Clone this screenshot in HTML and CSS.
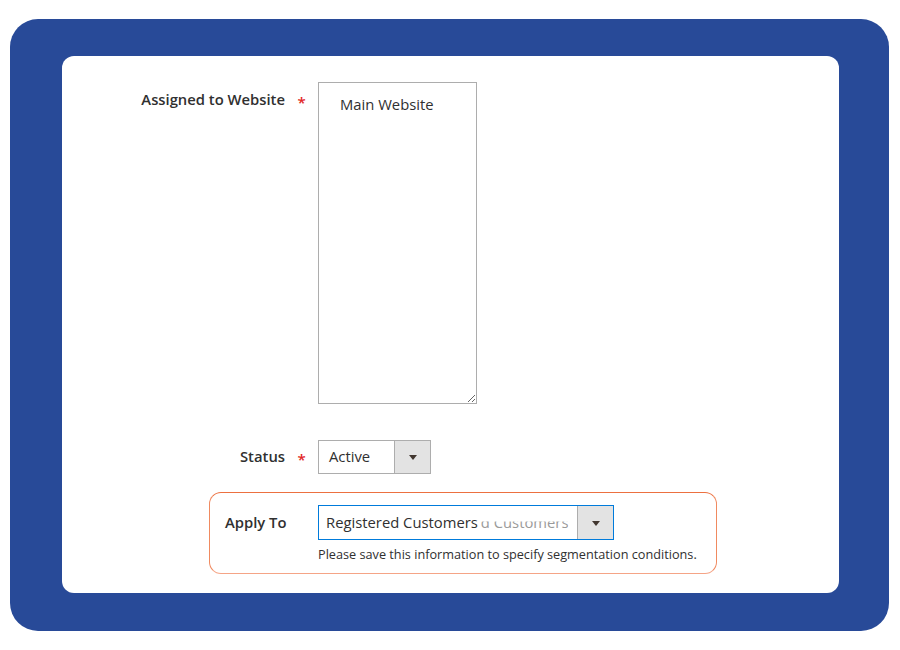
FILE: index.html
```html
<!DOCTYPE html>
<html>
<head>
<meta charset="utf-8">
<link rel="stylesheet" href="styles.css">
</head>
<body>
<div class="frame">
  <div class="panel">
    <div class="row row-website">
      <div class="label">Assigned to Website</div>
      <div class="req">*</div>
      <textarea class="multi" readonly>Main Website</textarea>
    </div>
    <div class="row row-status">
      <div class="label">Status</div>
      <div class="req">*</div>
      <div class="select select-status">
        <span class="select-text">Active</span>
        <span class="select-btn"><span class="tri"></span></span>
      </div>
    </div>
    <div class="apply-box">
      <div class="apply-row">
        <div class="apply-label">Apply To</div>
        <div class="apply-control">
          <div class="select select-apply">
            <span class="select-text">Registered Customers<span class="ghost">d Customers</span></span>
            <span class="select-btn"><span class="tri"></span></span>
          </div>
          <div class="note">Please save this information to specify segmentation conditions.</div>
        </div>
      </div>
    </div>
  </div>
</div>
</body>
</html>
```
FILE: styles.css
```css
html, body {
  margin: 0;
  padding: 0;
  background: #ffffff;
}
body {
  font-family: "Open Sans", "Liberation Sans", sans-serif;
  color: #303030;
  width: 900px;
  height: 650px;
  overflow: hidden;
}
.frame {
  margin: 19px 0 0 10px;
  width: 879px;
  height: 612px;
  box-sizing: border-box;
  background: #284a98;
  border-radius: 28px;
  padding: 37px 50px 38px 52px;
}
.panel {
  width: 777px;
  height: 537px;
  background: #ffffff;
  border-radius: 12px;
  padding-top: 26px;
  box-sizing: border-box;
}
.row {
  display: flex;
  align-items: flex-start;
}
.label {
  width: 223px;
  text-align: right;
  font-size: 14.8px;
  font-weight: 600;
  line-height: 18px;
  color: #303030;
}
.req {
  width: 33px;
  text-align: center;
  color: #e22626;
  font-size: 15px;
  line-height: 18px;
  font-weight: 600;
}
.row-website .label {
  padding-top: 8px;
}
.row-website .req {
  padding-top: 11px;
}
.multi {
  width: 159px;
  height: 322px;
  box-sizing: border-box;
  border: 1px solid #adadad;
  padding: 12px 10px 0 21px;
  margin: 0;
  font-family: "Open Sans", "Liberation Sans", sans-serif;
  font-size: 14.8px;
  line-height: 18px;
  color: #303030;
  resize: both;
  outline: none;
  background: #ffffff;
}
.row-status {
  margin-top: 36px;
  align-items: center;
}
.row-status .label {
  padding-bottom: 2px;
}
.row-status .req {
  padding-top: 3px;
}
.select {
  display: flex;
  box-sizing: border-box;
  border: 1px solid #adadad;
  background: #ffffff;
}
.select-status {
  width: 113px;
  height: 34px;
}
.select-text {
  flex: 1;
  display: flex;
  align-items: center;
  font-size: 14.8px;
  padding-left: 10px;
  padding-bottom: 2px;
  color: #303030;
  white-space: nowrap;
  overflow: hidden;
}
.select-btn {
  width: 35px;
  background: #e3e3e3;
  border-left: 1px solid #adadad;
  display: flex;
  align-items: center;
  justify-content: center;
}
.tri {
  width: 0;
  height: 0;
  border-left: 4px solid transparent;
  border-right: 4px solid transparent;
  border-top: 5px solid #41362f;
  margin-top: 1px;
}
.apply-box {
  margin: 18px 0 0 147px;
  width: 508px;
  box-sizing: border-box;
  border: 1px solid #f08a60;
  border-top-color: #ec7040;
  border-bottom-color: #f5a486;
  border-radius: 12px;
  padding: 12px 0 10px 0;
}
.apply-row {
  display: flex;
  align-items: flex-start;
}
.apply-label {
  width: 108px;
  padding-left: 15px;
  box-sizing: border-box;
  font-size: 14.8px;
  font-weight: 600;
  line-height: 18px;
  padding-top: 8px;
  color: #303030;
}
.select-apply {
  width: 296px;
  height: 35px;
  border-color: #007bdb;
}
.select-apply .select-text {
  padding-left: 7px;
}
.ghost {
  color: #9a9a9a;
  clip-path: inset(50% 0 0 0);
  margin-left: 3px;
}
.note {
  font-size: 12.7px;
  line-height: 17px;
  margin-top: 6px;
  color: #303030;
  white-space: nowrap;
}
```
